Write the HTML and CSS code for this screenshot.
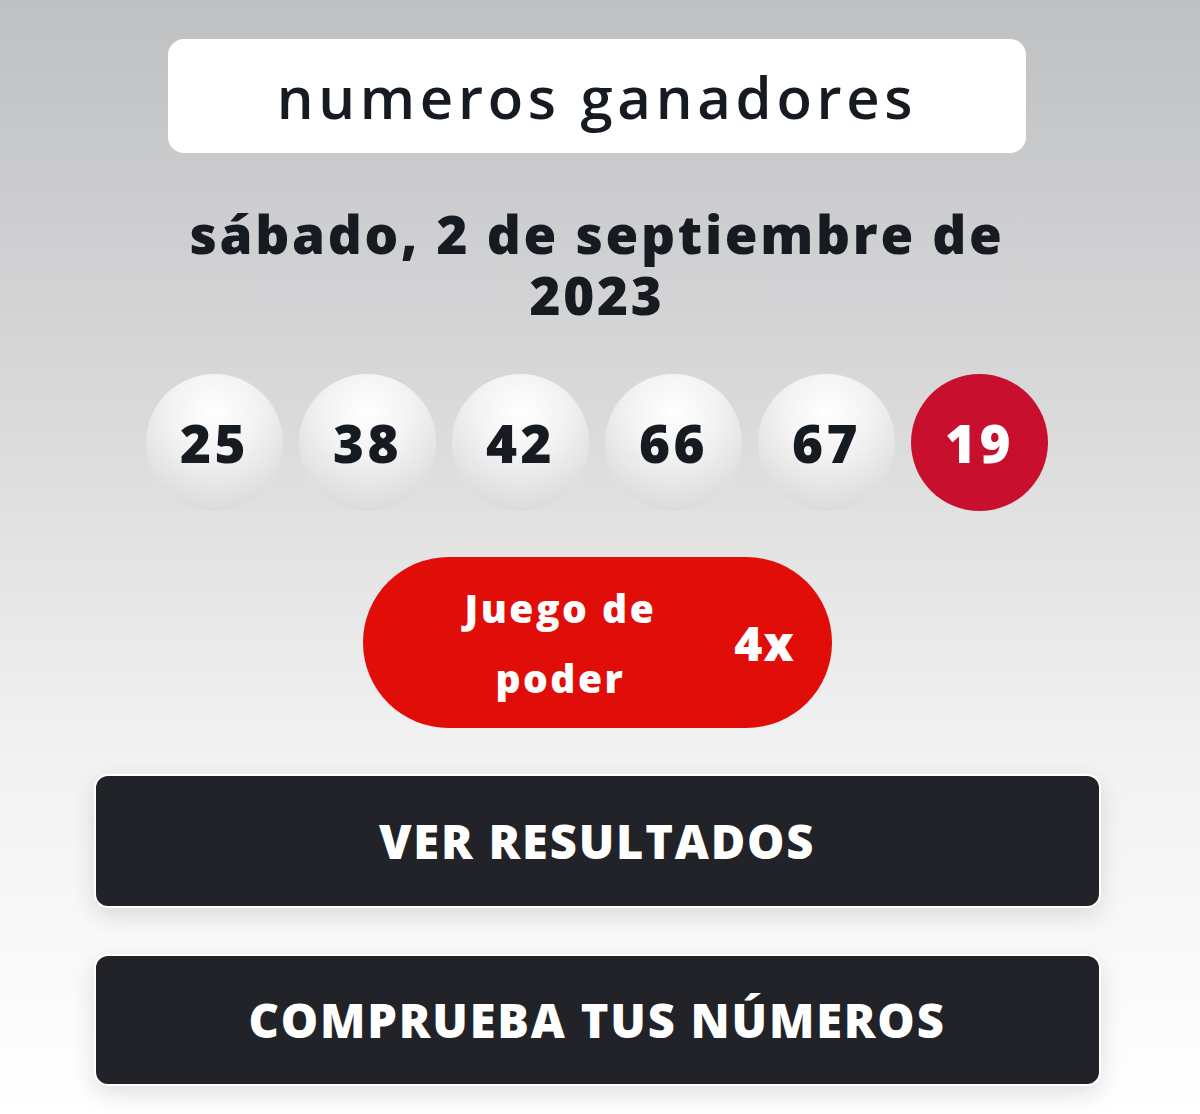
FILE: index.html
```html
<!DOCTYPE html>
<html lang="es">
<head>
    <meta charset="UTF-8">
    <meta name="viewport" content="width=device-width, initial-scale=1.0">
    <title>Numeros ganadores</title>
    <link rel="stylesheet" href="styles.css">
</head>
<body>
    <div class="container">
        <div class="title-box">numeros ganadores</div>
        <h2 class="draw-date">sábado, 2 de septiembre de<br>2023</h2>
        <div class="balls">
            <div class="ball">25</div>
            <div class="ball">38</div>
            <div class="ball">42</div>
            <div class="ball">66</div>
            <div class="ball">67</div>
            <div class="ball powerball">19</div>
        </div>
        <div class="power-play">
            <span class="power-label">Juego de<br>poder</span>
            <span class="power-value">4x</span>
        </div>
        <a class="action-btn" href="#">VER RESULTADOS</a>
        <a class="action-btn" href="#">COMPRUEBA TUS NÚMEROS</a>
    </div>
</body>
</html>
```

FILE: styles.css
```css
body {
    margin: 0;
    height: 1114px;
    font-family: "Open Sans", "Liberation Sans", sans-serif;
    color: #161a21;
    background: linear-gradient(to bottom, #bfc0c2 0%, #dcdcdd 40%, #f2f2f2 68%, #ffffff 100%);
}
.container {
    display: flex;
    flex-direction: column;
    align-items: center;
    padding: 39px 6px 0 0;
}
.title-box {
    width: 858px;
    height: 114px;
    box-sizing: border-box;
    background: #fff;
    border-radius: 16px;
    display: flex;
    justify-content: center;
    align-items: center;
    font-size: 58px;
    font-weight: 600;
    letter-spacing: 4.7px;
}
.draw-date {
    margin: 50px 0 0;
    font-size: 53px;
    font-weight: 800;
    line-height: 61px;
    letter-spacing: 2.7px;
    text-align: center;
}
.balls {
    display: flex;
    gap: 16px;
    margin-top: 49px;
}
.ball {
    width: 137px;
    height: 137px;
    border-radius: 50%;
    display: flex;
    justify-content: center;
    align-items: center;
    font-size: 53px;
    font-weight: 800;
    letter-spacing: 3.5px;
    background: radial-gradient(circle at 50% 28%, #ffffff 0%, #f3f3f3 35%, #dcdcdc 80%, #cfcfcf 100%);
}
.powerball {
    background: #c8102e;
    color: #fff;
}
.power-play {
    width: 469px;
    height: 171px;
    box-sizing: border-box;
    margin-top: 46px;
    padding-left: 102px;
    border-radius: 86px;
    background: #e10d08;
    color: #fff;
    font-weight: 800;
    display: flex;
    align-items: center;
    gap: 78px;
}
.power-label {
    font-size: 39px;
    line-height: 70px;
    letter-spacing: 2.5px;
    text-align: center;
}
.power-value {
    font-size: 48px;
    letter-spacing: 1px;
}
.action-btn {
    width: 1007px;
    height: 134px;
    box-sizing: border-box;
    margin-top: 46px;
    border: 2px solid #fff;
    border-radius: 14px;
    background: #212328;
    color: #fff;
    text-decoration: none;
    font-size: 47px;
    font-weight: 800;
    letter-spacing: 1.8px;
    display: flex;
    justify-content: center;
    align-items: center;
    box-shadow: 0 8px 24px rgba(0, 0, 0, 0.12);
}
.action-btn + .action-btn {
    height: 132px;
}
```
